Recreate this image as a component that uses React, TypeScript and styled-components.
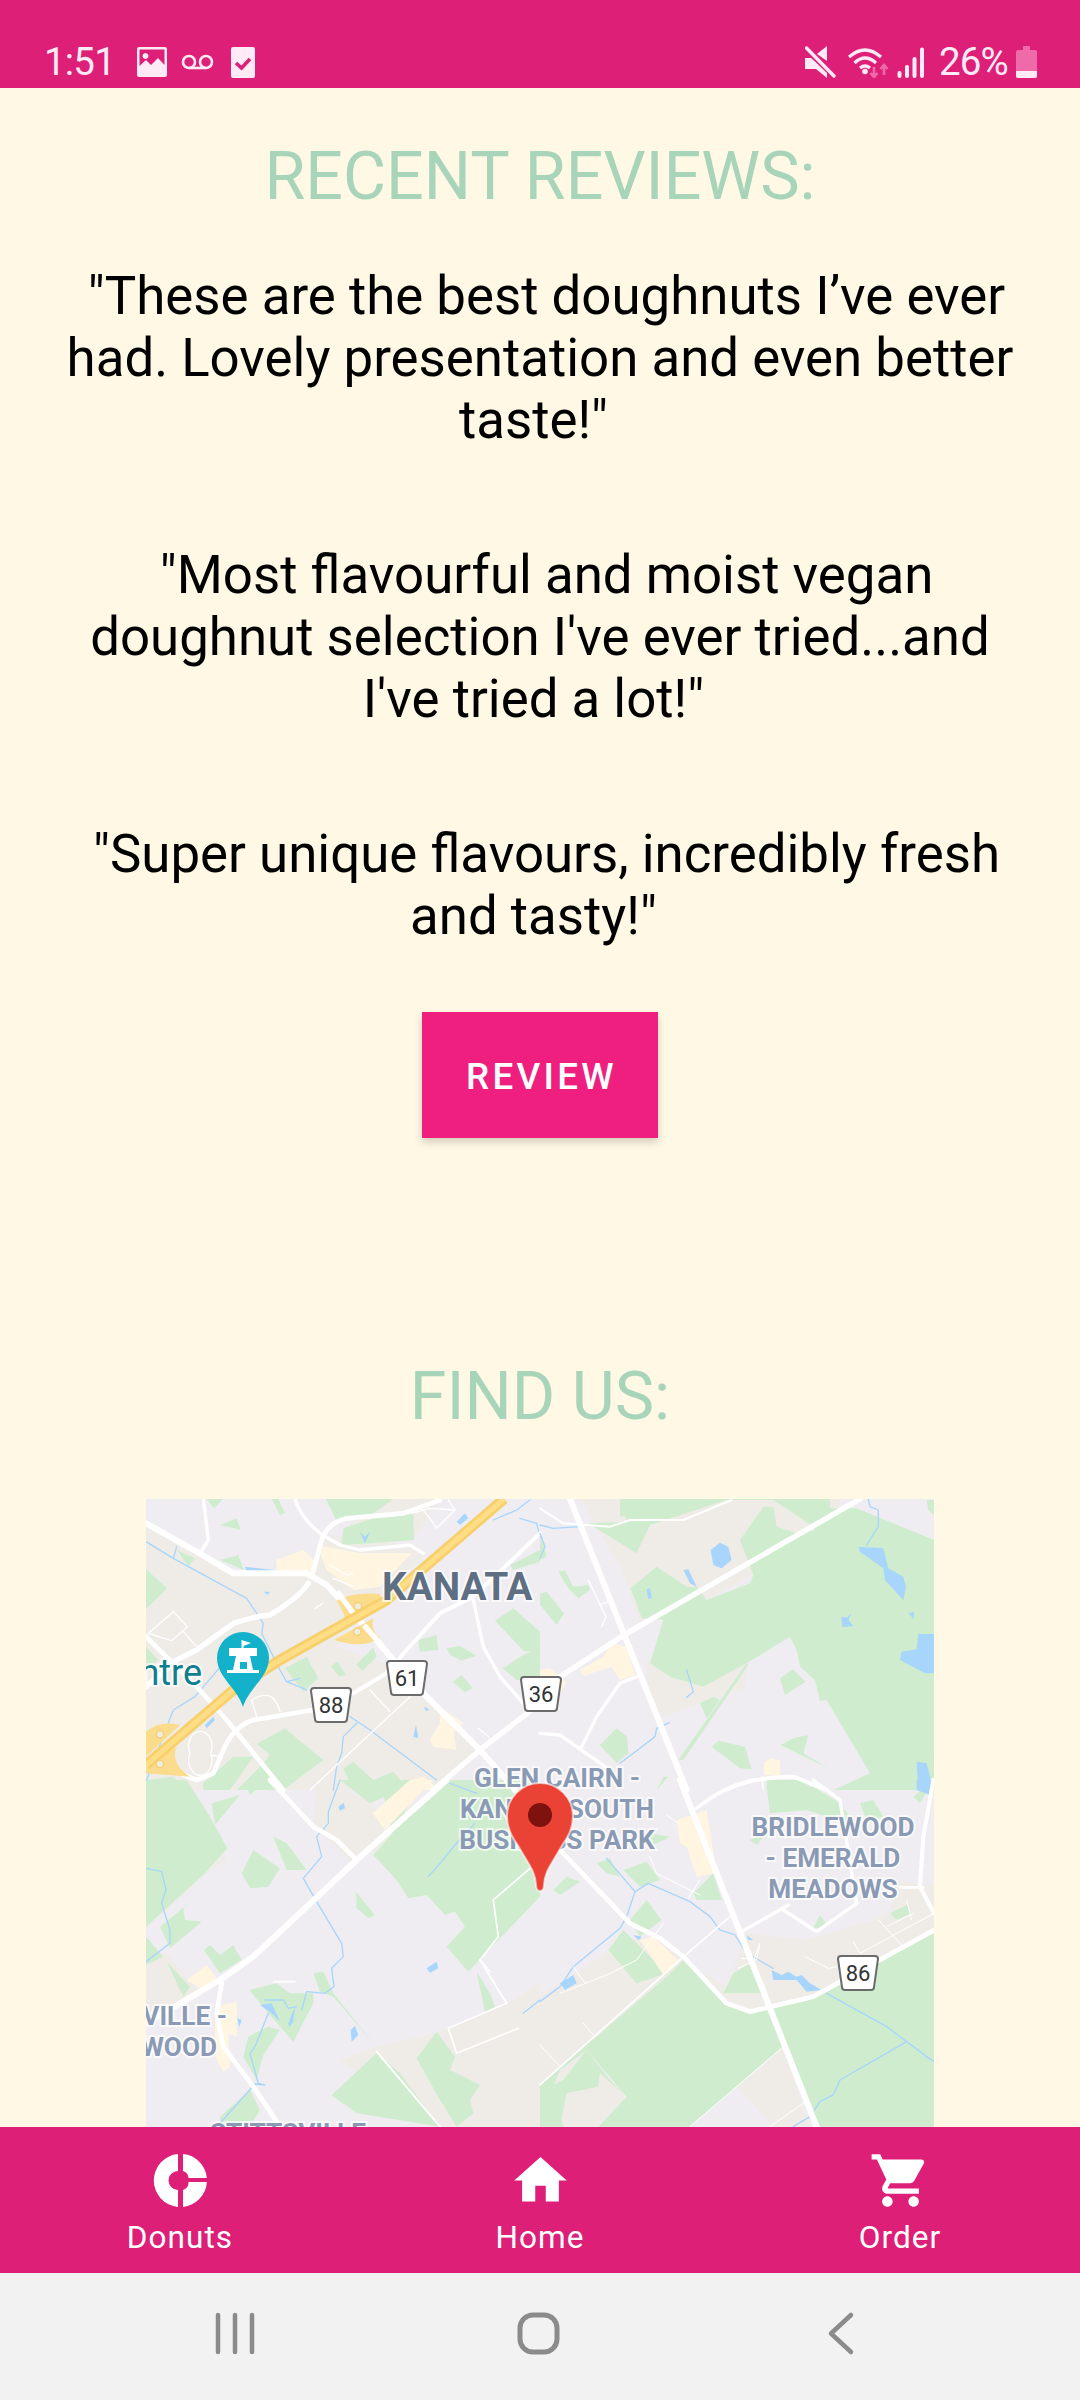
import React from "react";
import styled, { createGlobalStyle } from "styled-components";

const GlobalStyle = createGlobalStyle`
  html, body {
    margin: 0;
    padding: 0;
    background: #fff8e5;
  }
  * {
    box-sizing: border-box;
  }
`;

const Screen = styled.div`
  width: 1080px;
  height: 2400px;
  display: flex;
  flex-direction: column;
  overflow: hidden;
  font-family: Roboto, "Liberation Sans", sans-serif;
  background: #fff8e5;
`;

const StatusBar = styled.header`
  height: 88px;
  flex: none;
  display: flex;
  justify-content: space-between;
  align-items: flex-end;
  padding: 0 43px 10px 44px;
  background: #dd1f78;
  color: #ffeaf5;
`;

const StatusGroup = styled.div`
  display: flex;
  align-items: center;
  height: 32px;
`;

const StatusText = styled.span<{ $gap: number }>`
  font-size: 38.5px;
  line-height: 32px;
  letter-spacing: -0.8px;
  margin-right: ${(p) => p.$gap}px;
`;

const StatusIcon = styled.svg<{ $w: number; $h: number; $mr?: number }>`
  width: ${(p) => p.$w}px;
  height: ${(p) => p.$h}px;
  margin-right: ${(p) => p.$mr ?? 0}px;
  flex: none;
  display: block;
`;

const Content = styled.main`
  flex: 1;
  min-height: 0;
  overflow: hidden;
  display: flex;
  flex-direction: column;
  align-items: center;
`;

const SectionTitle = styled.h2<{ $top: number }>`
  margin: ${(p) => p.$top}px 0 0;
  font-size: 66.3px;
  line-height: 74px;
  font-weight: 400;
  color: #a8d5ba;
`;

const Review = styled.p<{ $top: number }>`
  width: 960px;
  margin: ${(p) => p.$top}px 0 0;
  font-size: 52.8px;
  line-height: 62px;
  font-weight: 400;
  color: #000;
  text-align: center;
  white-space: pre-wrap;
`;

const ReviewButton = styled.button`
  width: 236px;
  height: 126px;
  margin-top: 65px;
  padding: 2px 0 0 3px;
  flex: none;
  border: 0;
  border-radius: 0;
  background: #ef1f7f;
  color: #fff;
  font-family: inherit;
  font-size: 36.75px;
  font-weight: 500;
  letter-spacing: 3.28px;
  box-shadow: 0 4px 8px rgba(0, 0, 0, 0.18);
`;

const MapFrame = styled.svg`
  width: 788px;
  height: 628px;
  margin-top: 66px;
  flex: none;
  display: block;
  background: #efedf1;
`;

const MapLabel = styled.text<{ $size?: number }>`
  font-family: Roboto, "Liberation Sans", sans-serif;
  font-size: ${(p) => p.$size ?? 26.2}px;
  font-weight: 700;
  fill: #8a9ab4;
  stroke: rgba(255, 255, 255, 0.7);
  stroke-width: 4px;
  paint-order: stroke;
`;

const CityLabel = styled(MapLabel)`
  fill: #5e6f84;
`;

const PlaceLabel = styled(MapLabel)`
  font-weight: 400;
  fill: #0e7f8c;
`;

const ShieldText = styled.text`
  font-family: Roboto, "Liberation Sans", sans-serif;
  font-size: 22px;
  fill: #333;
`;

const BottomNav = styled.nav`
  height: 146px;
  flex: none;
  display: grid;
  grid-template-columns: repeat(3, 360px);
  background: #dd1f78;
`;

const NavItem = styled.button`
  display: flex;
  flex-direction: column;
  align-items: center;
  padding: 22px 0 0;
  border: 0;
  background: none;
  color: #fff;
  font-family: inherit;
  font-size: 31.5px;
  line-height: 38px;
  letter-spacing: 1.05px;
  gap: 7px;
`;

const NavIcon = styled.svg`
  width: 63px;
  height: 63px;
  display: block;
  fill: #fff;
`;

const SystemNav = styled.footer`
  height: 127px;
  flex: none;
  display: grid;
  grid-template-columns: repeat(3, 360px);
  background: #f2f2f2;
  margin-left: 0;
`;

const SystemSlot = styled.div<{ $shift: number }>`
  display: flex;
  justify-content: center;
  padding: 38px 0 0;
  transform: translateX(${(p) => p.$shift}px);
`;

const SystemIcon = styled.svg`
  width: 48px;
  height: 48px;
  display: block;
  fill: none;
  stroke: #8b8b8b;
  stroke-linecap: round;
  stroke-linejoin: round;
`;

const GREEN = "#cfedce";
const WARM = "#efece8";
const SAND = "#fff5e1";
const WATER = "#a8d5fb";
const RAMP = "#fbdc8c";

type Shape = [string, string];
type Line = [number, string];

interface Quadrant {
  x: number;
  y: number;
  warm: string[];
  green: string[];
  sand: string[];
  ponds: string[];
  streams: string[];
  roads: Line[];
}

const toShapes = (q: Quadrant): Shape[] => [
  ...q.warm.map((d): Shape => [WARM, d]),
  ...q.green.map((d): Shape => [GREEN, d]),
  ...q.sand.map((d): Shape => [SAND, d]),
  ...q.ponds.map((d): Shape => [WATER, d]),
];

// paths are written in the coordinates of a 3x crop of each quarter of the map
const quadrants: Quadrant[] = [
  {
    x: -6,
    y: -9,
    warm: [
      "M18 90L280 250L510 250L720 310L590 470L740 520L860 620L1020 780L880 900L18 900Z",
      "M540 130L810 165L860 190L720 320L520 260Z",
      "M680 27L900 27L820 150L620 120Z",
    ],
    green: [
      "M200 27L250 27L222 55Z",
      "M395 27L415 27L435 70L420 75Z",
      "M240 105L290 85L302 120Z",
      "M558 27L760 27L700 70L590 95Z",
      "M610 115L700 85L820 72L822 150L690 160L605 165Z",
      "M240 210L295 195L312 240Z",
      "M18 238L82 295L18 357Z",
      "M435 535L500 500L535 565L490 605Z",
      "M572 528L592 515L618 555L598 560Z",
      "M648 525L700 472L710 500L668 542Z",
      "M835 450L890 435L895 480L840 485Z",
      "M920 475L960 468L1010 497L965 512L930 495Z",
      "M938 575L965 555L998 595L975 607Z",
      "M1065 392L1120 355L1200 425L1200 490L1150 482Z",
      "M1088 535L1150 495L1200 475L1200 570L1130 570Z",
      "M1110 225L1200 180L1200 215L1120 240Z",
      "M350 762L435 715L550 810L430 900L290 900L360 830L390 795Z",
      "M190 880L280 800L340 800L270 900L190 900Z",
      "M18 870L100 860L140 900L18 900Z",
      "M610 835L640 815L700 870L760 845L790 880L700 900L640 900Z",
      "M18 470L55 510L18 540Z",
      "M110 180L165 205L145 230Z",
    ],
    sand: [
      "M410 210L490 180L525 215L520 245L410 240Z",
      "M530 165L660 190L815 190L720 290L640 300L560 240Z",
      "M870 750L900 700L900 650L970 700L940 730L950 780L880 770Z",
      "M780 880L850 860L900 900L770 900Z",
    ],
    ponds: [
      "M315 230L400 240L405 220L400 245L320 245Z",
      "M372 305L390 305L382 315Z",
      "M660 125L675 140L690 125L675 160Z",
      "M950 95L975 70L985 85L960 105Z",
      "M195 705L220 680L225 690L200 715Z",
      "M820 740L828 705L835 745Z",
      "M852 650L868 658L858 664Z",
    ],
    streams: [
      "M18 155L100 205L320 325L370 400L365 430L420 540L440 575L500 600",
      "M440 575L480 565",
      "M100 205L110 170",
      "M20 870L100 660L165 620L250 520",
      "M630 680L690 720L890 870",
      "M650 700L610 740L605 790L590 830L580 900",
      "M1060 90L1130 60L1170 30",
      "M1140 85L1190 100L1200 140",
    ],
    roads: [
      [18, "M18 100L170 185L280 250L500 250L560 285L640 370L760 510L860 620L1020 780L1100 870L1125 900"],
      [10, "M190 27L205 150L180 190"],
      [10, "M465 27Q480 80 540 130L600 165L660 180L810 165L850 190"],
      [14, "M515 262L545 150Q560 100 620 85L790 70L900 30"],
      [16, "M505 280Q480 320 390 375Q340 380 280 400L170 480L110 510L18 590"],
      [14, "M18 440L170 590L260 690L430 900"],
      [14, "M520 660L340 690Q280 710 250 780L220 850L170 870L120 850L60 790"],
      [12, "M640 610L740 550L800 480L900 370L1000 320L1200 130"],
      [10, "M1000 330L1030 470L1080 560L1150 640"],
      [16, "M880 900L1020 780L1200 640"],
      [4, "M510 900L810 620"],
      [4, "M690 600L750 665"],
      [4, "M25 430L100 365L142 410L95 452ZM130 425L170 470"],
      [4, "M570 225L620 255L640 250M580 265L640 290"],
      [4, "M815 70L870 55L945 60L890 115L870 85L840 50M925 30L945 60"],
      [4, "M150 790A35 45 0 1 0 212 790A35 45 0 1 0 150 790M212 795L240 800"],
      [4, "M335 630Q400 590 420 665M335 630L350 680"],
      [4, "M525 355L548 340"],
      [4, "M1015 715L1048 742"],
    ],
  },
  {
    x: 394,
    y: -9,
    warm: [
      "M120 27L900 27L870 130L500 330L300 400L250 250Z",
      "M320 520L620 430L620 590L370 680L320 640Z",
      "M1020 860L1182 750L1182 780L1030 870Z",
    ],
    green: [
      "M145 100L260 95L242 27L870 27L870 55L950 55L1182 150L1182 900L880 900L990 850L860 630L840 632L825 570L780 530L770 480L750 440L620 520L490 590L390 560L330 520L370 390L305 385L272 295L350 230L440 290L470 290L500 330L630 280L640 255L600 150L670 50L700 50L710 110L770 130L830 120L870 185L835 140L820 110L700 30L560 30L330 105L290 190Z",
      "M240 80L240 30L300 30L320 65Z",
      "M0 310L20 305L72 370L50 405L0 345Z",
      "M55 245L75 240L100 290L145 285L150 300L115 325L85 295Z",
      "M0 125L20 200L0 210Z",
      "M720 565L760 538L797 575L735 615Z",
      "M515 770L535 752L615 770L635 838L600 835Z",
      "M760 745L805 735L790 790L865 835L722 765Z",
      "M180 765L230 715L262 740L265 790L230 820Z",
      "M480 640L520 620L540 630L500 685Z",
      "M620 520L415 810L430 810L625 525Z",
      "M1030 870L1182 780L1182 900L1050 900Z",
      "M370 860L385 860L350 900Z",
      "M1160 30L1182 30L1182 75L1165 60Z",
      "M680 870L800 870L810 900L680 900Z",
    ],
    sand: [
      "M120 540L190 500L215 460L260 470L285 555L240 570L215 530L130 558Z",
      "M0 540L30 535L80 575L60 610L0 600Z",
      "M672 815L695 805L720 812L720 856L672 856Z",
    ],
    ponds: [
      "M512 180L540 158L565 170L575 210L545 235L520 225Z",
      "M430 240L445 238L470 290L450 280Z",
      "M320 298L330 295L336 325L325 327Z",
      "M955 170L1030 175L1045 235L1090 260L1098 290L1090 330L1035 270L1030 235L960 185Z",
      "M903 382L922 382L935 370L925 390L940 408L908 412Z",
      "M1105 370L1122 365L1122 388Z",
      "M1135 432L1182 432L1182 550L1155 550L1080 510L1085 485L1130 478Z",
      "M1130 815L1160 820L1175 880L1170 900L1135 900Z",
    ],
    streams: [
      "M985 27L990 50L1015 60L1015 110L980 165",
      "M0 105L40 115L120 110",
      "M0 130L15 170L0 205",
      "M440 540L460 605L440 622",
      "M240 820L300 775L345 740L350 715L388 698",
    ],
    roads: [
      [18, "M90 27L255 440L440 900"],
      [16, "M960 27L260 430L60 560"],
      [6, "M0 55L70 100L210 110L270 90L430 90L575 30"],
      [10, "M290 560L240 580L170 680L125 770"],
      [10, "M0 730L60 735L195 830"],
      [4, "M145 270L198 380L185 410M178 345L205 335"],
      [12, "M555 900Q640 860 760 860L860 900"],
      [4, "M665 860L670 900"],
    ],
  },
  {
    x: -6,
    y: 281,
    warm: [
      "M18 560L80 520L180 640L18 740Z",
      "M20 445L200 280L260 240L220 110L250 200L60 400Z",
      "M600 840L710 800L890 760L1100 670L1200 610L1200 1040L900 1040Z",
      "M530 0L690 60L760 180L640 250L520 140Z",
    ],
    green: [
      "M18 0L140 0L210 110L262 205L195 280L18 440Z",
      "M215 70L300 45L225 135Z",
      "M320 20L380 0L330 45Z",
      "M305 280L340 210L420 265L385 320L330 325Z",
      "M400 170L440 190L500 270L440 270Z",
      "M600 0L680 0L780 30L690 70Z",
      "M720 0L840 0L760 170Z",
      "M700 225L900 0L1170 0L1200 250L1200 350L985 575L920 500L975 440L945 395L915 405L860 345L805 355L770 300Z",
      "M648 335L705 405L685 415L650 385Z",
      "M60 440L170 350L130 385L135 420L185 425L90 505Z",
      "M192 510L210 495L240 525L280 495L305 540L240 580Z",
      "M18 470L70 530L18 555Z",
      "M80 545L150 620L130 650Z",
      "M328 630L410 610L450 640L520 640L520 670L460 785L385 700Z",
      "M520 580L550 575L580 640L700 790L580 650L540 635Z",
      "M325 770L385 740L420 750L370 825L350 900L310 830Z",
      "M240 1010L330 930L360 990L330 1040L240 1040Z",
      "M575 945L710 820L780 880L900 1040L650 1000Z",
      "M830 835L890 755L945 830L930 870L1020 915L990 960L1000 1000L950 1040L900 960Z",
      "M1010 575L1050 640L1065 680L1035 695Z",
    ],
    sand: [
      "M698 100L810 0L880 0L735 150Z",
      "M140 600L200 555L235 600L190 630Z",
      "M225 680L290 665L290 770L265 760L270 860L250 875L225 830Z",
    ],
    ponds: [
      "M595 80L612 68L615 85L600 92Z",
      "M360 675L395 670L420 725L395 700Z",
      "M445 730L465 680L460 725L448 740Z",
      "M292 715L305 720L298 742Z",
      "M632 750L645 738L655 765L635 785Z",
      "M860 565L890 545L895 565L870 578Z",
    ],
    streams: [
      "M600 0L565 95L565 130L530 170L545 230L490 295L530 365L605 490L610 530L575 565L582 620L555 640L500 635L485 690",
      "M18 265L65 275L78 330L65 370L90 450L90 490L18 545",
      "M385 700L345 800L330 820L355 910L375 915L345 912L240 1030",
      "M375 660L430 660L445 685L470 680",
      "M865 290L900 250L945 195L1005 130",
      "M1150 700L1200 660",
      "M930 10L1010 40",
    ],
    roads: [
      [14, "M390 0L520 140L590 180L650 240"],
      [18, "M920 0L650 240L340 530L240 600L18 730"],
      [14, "M245 610L230 700L250 800L340 920L420 1040"],
      [5, "M1170 265L1060 360L1075 470L1020 540L1100 670L925 745L950 820L1135 745"],
      [5, "M1020 540L1050 575"],
      [6, "M710 815L900 1040"],
      [5, "M400 605L465 605"],
    ],
  },
  {
    x: 394,
    y: 281,
    warm: [
      "M0 650L180 530L300 470L430 530L550 680L690 690L820 650L1182 450L1182 330L1000 420L800 480L620 460L560 620L430 540L340 640L0 915Z",
      "M590 920L730 800L810 1040L700 1040Z",
      "M30 900L130 810L260 950L170 1040L60 1040Z",
      "M1060 300L1182 320L1182 400L1050 440Z",
    ],
    green: [
      "M170 250L210 235L240 290L200 280Z",
      "M250 270L320 245L360 300L300 320Z",
      "M270 420L320 360L365 420L300 470Z",
      "M205 510L250 450L380 580L290 610Z",
      "M460 340L520 280L545 360L470 360Z",
      "M40 330L80 290L120 305L60 345Z",
      "M0 30L60 0L50 40Z",
      "M680 20L820 20L900 70L950 140L800 90L690 100Z",
      "M820 445L840 405L865 440Z",
      "M630 180L690 150L650 195Z",
      "M1050 400L1100 375L1115 400L1070 420Z",
      "M960 70L1000 60L1030 110L980 120Z",
      "M1182 0L1140 70L1120 50Z",
      "M330 160L390 170L340 195Z",
      "M0 1040L0 915L380 590L430 540L560 670L630 695L820 650L1182 460L1182 1040L830 1040L730 800L590 920L450 1040L175 1040L260 950L140 810L60 870L40 920L70 1040Z",
      "M550 640L580 580L630 550L670 640Z",
      "M40 915L70 900L140 810L210 900L260 950L180 880L175 920L80 940L60 1040Z",
    ],
    sand: [
      "M410 120L500 90L530 280L470 290L440 200L420 190Z",
      "M300 480L340 470L420 545L370 585Z",
    ],
    ponds: [
      "M1130 0L1182 0L1170 45L1130 30Z",
      "M60 610L100 585L110 610L75 630Z",
      "M280 465L305 470L295 480Z",
      "M620 465L640 480L625 480Z",
      "M695 570L725 585L745 575L770 590L785 585L810 610L845 630L800 635L770 600L700 600Z",
    ],
    streams: [
      "M200 235L285 335L260 410L240 445L100 560L60 620L0 665",
      "M285 335L325 310L450 365L510 410L540 450L585 465L620 520L700 565",
      "M860 640L1040 740L1100 785L1160 830L1182 845",
      "M1100 785L900 900L880 945L840 965L810 1010L760 1040",
    ],
    roads: [
      [18, "M420 0L830 1040"],
      [14, "M60 210L270 430L360 475L430 530L560 670L630 695L820 650L1182 450"],
      [5, "M0 915L420 540L570 410"],
      [10, "M605 455L745 375"],
      [10, "M470 85Q550 20 640 0M820 0L900 60L950 370L830 455L730 390"],
      [12, "M1180 0L1150 170L1140 320L1182 400"],
      [8, "M1080 322L1150 322"],
      [3, "M330 230L350 280L480 345M445 355L480 300"],
      [3, "M60 640L200 585L290 540L370 430"],
      [3, "M100 560L135 610"],
      [3, "M450 1040L730 800"],
      [3, "M130 730L165 770M0 795L60 860"],
      [3, "M690 1040L790 970L820 990"],
      [3, "M795 530L865 565L890 560"],
      [3, "M940 485L960 520L1182 400M1015 420L1085 495M1040 440L1120 400M1100 360L1115 420"],
      [3, "M595 565L640 545L660 490L650 540L605 535"],
      [3, "M380 105L415 130"],
    ],
  },
];

function Shield({ x, y, label }: { x: number; y: number; label: string }) {
  return (
    <g transform={`translate(${x} ${y})`}>
      <path
        d="M-17 -17H17Q20 -17 20 -14L16 14Q16 17 13 17H-13Q-16 17 -16 14L-20 -14Q-20 -17 -17 -17Z"
        fill="#fff"
        stroke="#6b6b6b"
        strokeWidth={2}
      />
      <ShieldText x={0} y={8} textAnchor="middle">
        {label}
      </ShieldText>
    </g>
  );
}

function MapView() {
  return (
    <MapFrame viewBox="0 0 788 628">
      {quadrants.map((q, i) => (
        <g key={`area_${i}`} transform={`translate(${q.x} ${q.y}) scale(0.3333)`}>
          {toShapes(q).map(([fill, d], j) => (
            <path key={j} d={d} fill={fill} />
          ))}
        </g>
      ))}
      {quadrants.map((q, i) => (
        <g
          key={`line_${i}`}
          transform={`translate(${q.x} ${q.y}) scale(0.3333)`}
          fill="none"
          strokeLinejoin="round"
          strokeLinecap="round"
        >
          {q.streams.map((d, j) => (
            <path key={j} d={d} stroke={WATER} strokeWidth={4} />
          ))}
          {q.roads.map(([w, d], j) => (
            <path key={j} d={d} stroke="#fff" strokeWidth={w} />
          ))}
        </g>
      ))}

      {/* highway with its two interchanges */}
      <g transform="translate(-6 -9) scale(0.3333)" fill="none" strokeLinejoin="round">
        <path d="M590 332Q640 305 720 312L725 340L620 400Q610 360 590 332Z" fill={RAMP} />
        <path d="M582 450L700 385Q690 420 720 445L690 458Q640 470 582 450Z" fill={RAMP} />
        <path d="M18 725Q60 690 120 705L18 800Z" fill={RAMP} />
        <path d="M110 770Q90 820 150 860L18 850L18 830Z" fill={RAMP} />
        <path d="M592 305L640 370M672 405L745 490" stroke="#fff" strokeWidth={16} />
        <path d="M18 825L280 600L420 510L740 330L1092 27" stroke="#f7cf6b" strokeWidth={32} />
        <path d="M18 825L280 600L420 510L740 330L1092 27" stroke="#fedd85" strokeWidth={16} />
        <circle cx={654} cy={349} r={11} fill={WARM} stroke="#f7cf6b" strokeWidth={4} />
        <circle cx={652} cy={425} r={11} fill={WARM} stroke="#f7cf6b" strokeWidth={4} />
        <circle cx={60} cy={733} r={11} fill={WARM} stroke="#f7cf6b" strokeWidth={4} />
        <circle cx={60} cy={822} r={11} fill={WARM} stroke="#f7cf6b" strokeWidth={4} />
      </g>

      <CityLabel x={236} y={101} $size={38.8}>
        KANATA
      </CityLabel>
      <PlaceLabel x={56} y={186} textAnchor="end" $size={36}>
        Centre
      </PlaceLabel>
      <MapLabel x={411} y={288} textAnchor="middle">
        GLEN CAIRN -
      </MapLabel>
      <MapLabel x={411} y={319} textAnchor="middle">
        KANATA SOUTH
      </MapLabel>
      <MapLabel x={411} y={350} textAnchor="middle">
        BUSINESS PARK
      </MapLabel>
      <MapLabel x={687} y={337} textAnchor="middle">
        BRIDLEWOOD
      </MapLabel>
      <MapLabel x={687} y={368} textAnchor="middle">
        - EMERALD
      </MapLabel>
      <MapLabel x={687} y={399} textAnchor="middle">
        MEADOWS
      </MapLabel>
      <MapLabel x={81} y={526} textAnchor="end">
        VILLE -
      </MapLabel>
      <MapLabel x={71} y={557} textAnchor="end">
        WOOD
      </MapLabel>
      <MapLabel x={142} y={643} textAnchor="middle">
        STITTSVILLE
      </MapLabel>

      <Shield x={185} y={206} label="88" />
      <Shield x={261} y={179} label="61" />
      <Shield x={395} y={195} label="36" />
      <Shield x={712} y={474} label="86" />

      {/* teal landmark pin */}
      <path d="M97 208C92 190 71 178 71 159A26 26 0 1 1 123 159C123 178 102 190 97 208Z" fill="#14b1cb" />
      <path
        d="M81 174V171H87L90 157H83V149H95.500V141L105 144L97.500 147V149H111V157H104L107 171H113V174ZM94 170V163H101V170Z"
        fill="#fff"
        fillRule="evenodd"
      />

      {/* location pin */}
      <path
        d="M390 386Q390 392 394 392Q398 392 398 386C399 372 405 366 414 350C420 340 427 332 427 317A33 33 0 1 0 361 317C361 332 368 340 374 350C383 366 389 372 390 386Z"
        fill="#ea4335"
        stroke="#fff"
        strokeOpacity={0.6}
        strokeWidth={2}
      />
      <circle cx={394} cy={316} r={12} fill="#7e120e" />
    </MapFrame>
  );
}

export default function App() {
  return (
    <>
      <GlobalStyle />
      <Screen>
        <StatusBar>
          <StatusGroup>
            <StatusText $gap={22}>1:51</StatusText>
            <StatusIcon $w={30} $h={30} $mr={14} viewBox="0 0 30 30">
              <path
                fill="#ffeaf5"
                fillRule="evenodd"
                d="M2 0H28Q30 0 30 2V28Q30 30 28 30H2Q0 30 0 28V2Q0 0 2 0ZM2.500 2.500V19L9 13L14 18L21 11L27.500 18V2.500ZM8.500 6A3 3 0 1 1 8.490 6Z"
              />
            </StatusIcon>
            <StatusIcon $w={33} $h={16} $mr={17} viewBox="0 0 33 16" fill="none" stroke="#ffeaf5" strokeWidth={2.6}>
              <circle cx={8} cy={8} r={6} />
              <circle cx={25} cy={8} r={6} />
              <path d="M8 14H25" />
            </StatusIcon>
            <StatusIcon $w={24} $h={31} viewBox="0 0 24 31">
              <rect width={24} height={31} rx={2} fill="#ffeaf5" />
              <path d="M5 16L10.500 21L19 12" fill="none" stroke="#dd1f78" strokeWidth={3.6} />
            </StatusIcon>
          </StatusGroup>
          <StatusGroup>
            <StatusIcon $w={31} $h={32} $mr={11} viewBox="0 0 31 32">
              <path d="M0 12H6L10 15.500L22 27V32L11 23H0ZM12 8L22 0V15Z" fill="#ffeaf5" />
              <path d="M1.500 2L29 30" stroke="#ffeaf5" strokeWidth={3.4} strokeLinecap="round" />
            </StatusIcon>
            <StatusIcon $w={42} $h={32} $mr={8} viewBox="0 0 42 32" fill="none">
              <path
                d="M2 11Q18 -3 34 11M7.500 17Q18 7 29 17M13 22Q18 18 23 22"
                stroke="#ffeaf5"
                strokeWidth={3.2}
              />
              <circle cx={18} cy={25.500} r={2.800} fill="#ffeaf5" />
              <path d="M27 21V31M23.500 27L27 31L30.500 27M37 29V19M33.500 23L37 19L40.500 23" stroke="#f06aa8" strokeWidth={2.6} />
            </StatusIcon>
            <StatusIcon $w={28} $h={31} $mr={14} viewBox="0 0 28 31" fill="none" stroke="#ffeaf5" strokeWidth={4} strokeLinecap="round">
              <path d="M2.500 26V29M10 20V29M17.500 12V29M25 2.500V29" />
            </StatusIcon>
            <StatusText $gap={8}>26%</StatusText>
            <StatusIcon $w={21} $h={32} viewBox="0 0 21 32">
              <path d="M7 0H14V4H19Q21 4 21 6V30Q21 32 19 32H2Q0 32 0 30V6Q0 4 2 4H7Z" fill="#ef6aa9" />
              <path d="M0 25H21V30Q21 32 19 32H2Q0 32 0 30Z" fill="#ffeaf5" />
            </StatusIcon>
          </StatusGroup>
        </StatusBar>

        <Content>
          <SectionTitle $top={51}>RECENT REVIEWS:</SectionTitle>
          <Review $top={52}>{` "These are the best doughnuts I’ve ever had. Lovely presentation and even better taste!"\u00A0`}</Review>
          <Review $top={93}>{` "Most flavourful and moist vegan doughnut selection I've ever tried...and I've tried a lot!"\u00A0`}</Review>
          <Review $top={93}>{` "Super unique flavours, incredibly fresh and tasty!"\u00A0`}</Review>
          <ReviewButton>REVIEW</ReviewButton>
          <SectionTitle $top={221}>FIND US:</SectionTitle>
          <MapView />
        </Content>

        <BottomNav>
          <NavItem>
            <NavIcon viewBox="0 0 63 63">
              <path
                fillRule="evenodd"
                d="M29 5.100V22A8 8 0 0 0 29 41V57.900A26.500 26.500 0 0 1 29 5.100ZM34 5.100A26.500 26.500 0 0 1 57.900 29H39.500A8 8 0 0 0 34 22ZM57.900 33A26.500 26.500 0 0 1 34 57.900V41A8 8 0 0 0 39.500 33Z"
              />
            </NavIcon>
            Donuts
          </NavItem>
          <NavItem>
            <NavIcon viewBox="0 0 24 24">
              <path d="M10 20v-6h4v6h5v-8h3L12 3 2 12h3v8z" />
            </NavIcon>
            Home
          </NavItem>
          <NavItem>
            <NavIcon viewBox="0 0 24 24">
              <path d="M7 18c-1.100 0-1.990.9-1.990 2S5.900 22 7 22s2-.9 2-2-.9-2-2-2zM1 2v2h2l3.600 7.590-1.350 2.450c-.16.28-.25.61-.25.96 0 1.100.9 2 2 2h12v-2H7.420c-.14 0-.25-.11-.25-.25l.03-.12.9-1.630h7.450c.75 0 1.410-.41 1.750-1.030l3.580-6.470c.08-.14.12-.31.12-.48 0-.55-.45-1-1-1H5.210l-.94-2H1zm16 16c-1.100 0-1.990.9-1.990 2s.89 2 1.990 2 2-.9 2-2-.9-2-2-2z" />
            </NavIcon>
            Order
          </NavItem>
        </BottomNav>

        <SystemNav>
          <SystemSlot $shift={55}>
            <SystemIcon viewBox="0 0 48 48" strokeWidth={4.5}>
              <path d="M7 4V41M24 4V41M41 4V41" />
            </SystemIcon>
          </SystemSlot>
          <SystemSlot $shift={-2}>
            <SystemIcon viewBox="0 0 48 48" strokeWidth={5}>
              <rect x={6} y={4} width={37} height={37} rx={13} />
            </SystemIcon>
          </SystemSlot>
          <SystemSlot $shift={-58}>
            <SystemIcon viewBox="0 0 48 48" strokeWidth={4.5}>
              <path d="M33 4L13 22.500L33 41" />
            </SystemIcon>
          </SystemSlot>
        </SystemNav>
      </Screen>
    </>
  );
}
